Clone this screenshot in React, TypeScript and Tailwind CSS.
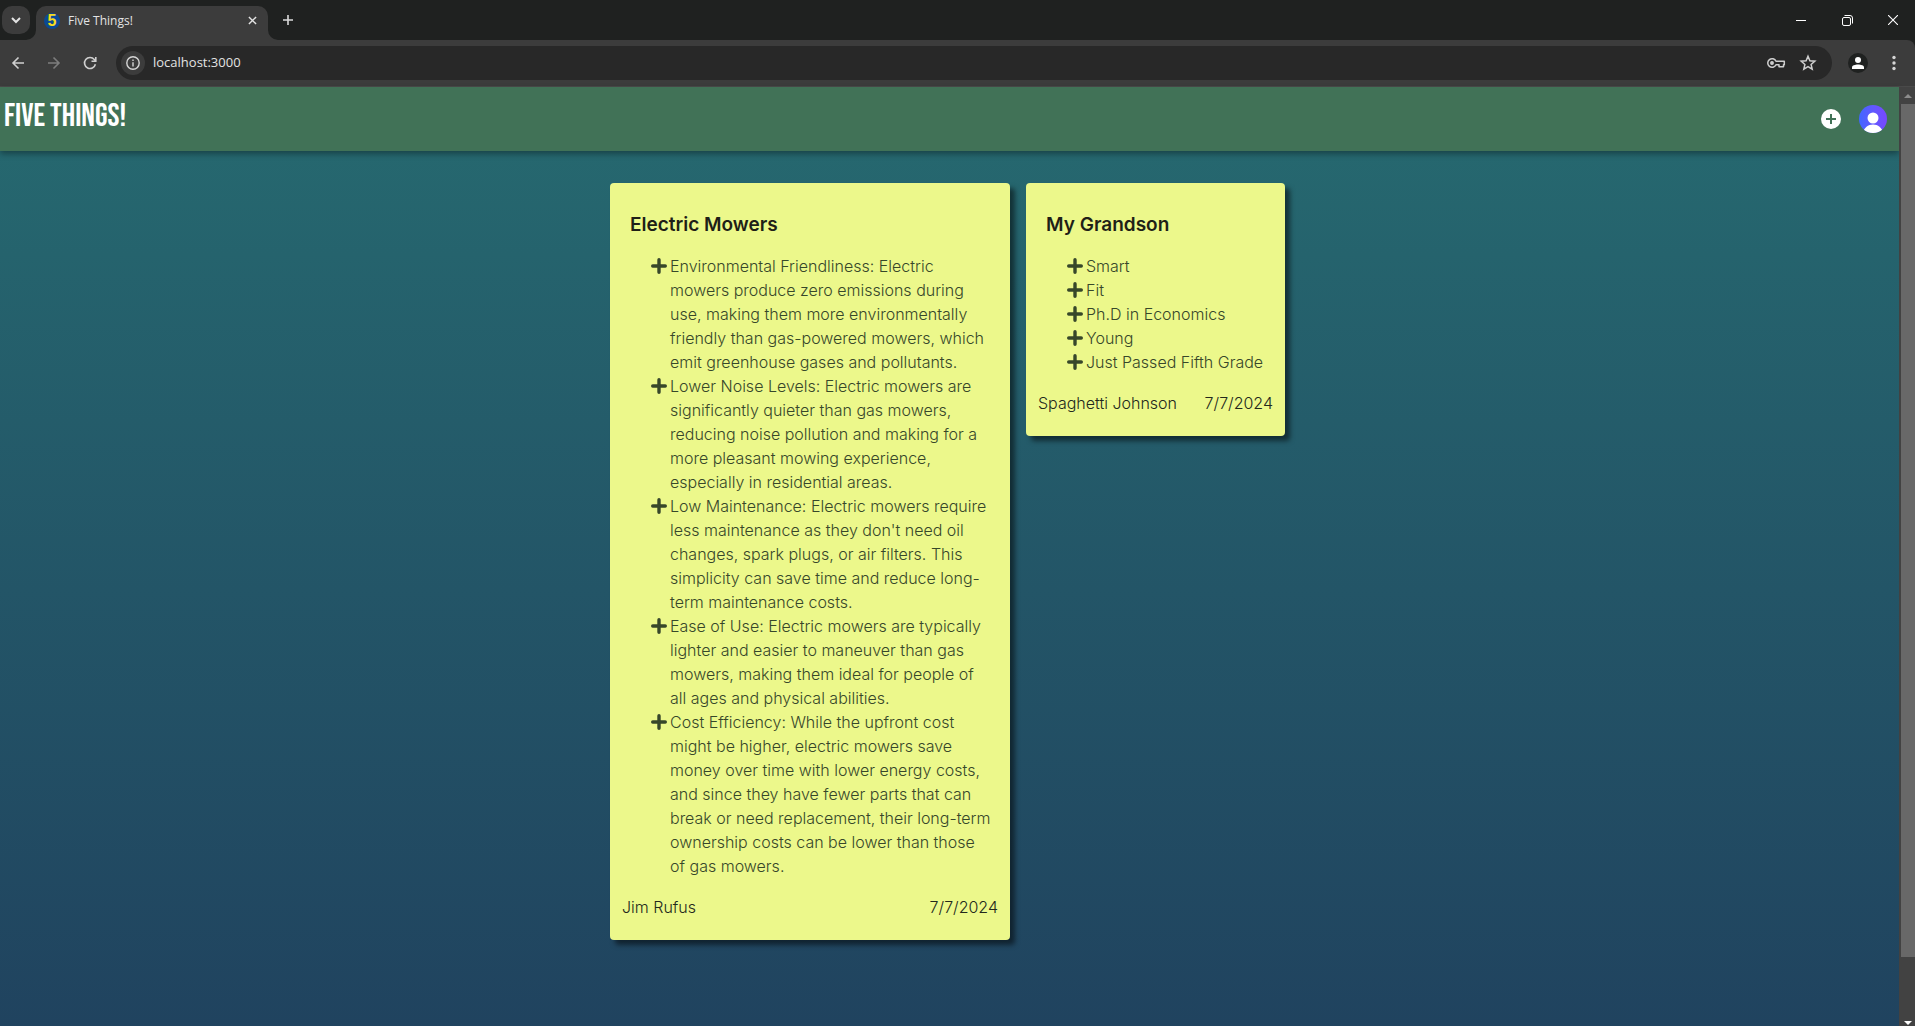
import React from 'react';

type Thing = { lines: string[] };
type CardData = { title: string; author: string; date: string; things: Thing[] };

const mowers: CardData = {
  title: 'Electric Mowers',
  author: 'Jim Rufus',
  date: '7/7/2024',
  things: [
    {
      lines: [
        'Environmental Friendliness: Electric',
        'mowers produce zero emissions during',
        'use, making them more environmentally',
        'friendly than gas-powered mowers, which',
        'emit greenhouse gases and pollutants.',
      ],
    },
    {
      lines: [
        'Lower Noise Levels: Electric mowers are',
        'significantly quieter than gas mowers,',
        'reducing noise pollution and making for a',
        'more pleasant mowing experience,',
        'especially in residential areas.',
      ],
    },
    {
      lines: [
        'Low Maintenance: Electric mowers require',
        "less maintenance as they don't need oil",
        'changes, spark plugs, or air filters. This',
        'simplicity can save time and reduce long-',
        'term maintenance costs.',
      ],
    },
    {
      lines: [
        'Ease of Use: Electric mowers are typically',
        'lighter and easier to maneuver than gas',
        'mowers, making them ideal for people of',
        'all ages and physical abilities.',
      ],
    },
    {
      lines: [
        'Cost Efficiency: While the upfront cost',
        'might be higher, electric mowers save',
        'money over time with lower energy costs,',
        'and since they have fewer parts that can',
        'break or need replacement, their long-term',
        'ownership costs can be lower than those',
        'of gas mowers.',
      ],
    },
  ],
};

const grandson: CardData = {
  title: 'My Grandson',
  author: 'Spaghetti Johnson',
  date: '7/7/2024',
  things: [
    { lines: ['Smart'] },
    { lines: ['Fit'] },
    { lines: ['Ph.D in Economics'] },
    { lines: ['Young'] },
    { lines: ['Just Passed Fifth Grade'] },
  ],
};

function PlusBullet() {
  return (
    <svg viewBox="0 0 16 16" className="h-6 w-4 shrink-0" fill="none" stroke="#37472a" strokeWidth="3.4" strokeLinecap="round" aria-hidden="true">
      <path d="M8 1.700v12.600M1.700 8h12.600" />
    </svg>
  );
}

function Card({ data, className }: { data: CardData; className: string }) {
  return (
    <article className={`rounded bg-[#ecf88b] pt-7 pb-[21px] text-base leading-6 text-[#23281c] shadow-[5px_5px_5px_rgba(0,0,0,0.5)] ${className}`}>
      <h2 className="px-5 text-[19px] leading-7 font-semibold text-[#1f1f17]">{data.title}</h2>
      <ul className="mt-[15px] pr-5 pl-[41px] font-light text-[#37472a]">
        {data.things.map((thing) => (
          <li key={thing.lines[0]} className="flex gap-[3px] whitespace-nowrap">
            <PlusBullet />
            <div>
              {thing.lines.map((line) => (
                <span key={line} className="block">
                  {line}{' '}
                </span>
              ))}
            </div>
          </li>
        ))}
      </ul>
      <footer className="mt-[17px] flex justify-between px-3 font-light whitespace-nowrap">
        <span>{data.author}</span>
        <span>{data.date}</span>
      </footer>
    </article>
  );
}

function TabStrip() {
  return (
    <div className="flex h-10 shrink-0 items-end justify-between bg-[#1f2120]">
      <div className="flex items-end">
        <div className="flex h-10 items-center bg-[#1f2120] pr-[6px] pl-[2px]">
          <button aria-label="Search tabs" className="grid size-7 place-items-center rounded-[10px] bg-[#3c3c3c]">
            <svg viewBox="0 0 10 10" className="size-[10px]" fill="none" stroke="#e3e3e3" strokeWidth="2">
              <path d="M1 3l4 4 4-4" />
            </svg>
          </button>
        </div>
        <div className="relative flex h-[34px] w-[232px] items-center rounded-t-[10px] bg-[#3c3c3c] pr-2 pb-[5px] pl-2">
          <svg viewBox="0 0 10 10" className="absolute bottom-0 -left-[10px] size-[10px]" fill="#3c3c3c">
            <path d="M10 0v10H0A10 10 0 0 0 10 0z" />
          </svg>
          <svg viewBox="0 0 10 10" className="absolute -right-[10px] bottom-0 size-[10px]" fill="#3c3c3c">
            <path d="M0 0v10h10A10 10 0 0 1 0 0z" />
          </svg>
          <span className="grid size-4 place-items-center rounded-full bg-[#0b4a94] font-['Liberation_Sans'] text-base leading-4 font-bold text-[#f5dc1e]">5</span>
          <span className="ml-2 flex-1 font-['Open_Sans'] text-xs text-[#e3e3e3]">Five Things!</span>
          <button aria-label="Close tab" className="grid size-4 place-items-center">
            <svg viewBox="0 0 10 10" className="size-[9px]" stroke="#e3e3e3" strokeWidth="1.6">
              <path d="M1 1l8 8M9 1l-8 8" />
            </svg>
          </button>
        </div>
        <button aria-label="New tab" className="ml-3 grid h-10 w-4 place-items-center">
          <svg viewBox="0 0 12 12" className="size-[12px]" stroke="#dadada" strokeWidth="1.6">
            <path d="M6 1v10M1 6h10" />
          </svg>
        </button>
      </div>
      <div className="flex h-10 items-center">
        <button aria-label="Minimize" className="grid h-10 w-[46px] place-items-center">
          <svg viewBox="0 0 10 10" className="size-[10px]" stroke="#fff">
            <path d="M0 5.5h10" />
          </svg>
        </button>
        <button aria-label="Restore" className="grid h-10 w-[46px] place-items-center">
          <svg viewBox="0 0 11 11" className="size-[11px]" fill="none" stroke="#fff">
            <rect x=".5" y="2.5" width="8" height="8" rx="1.5" />
            <path d="M2.5 .5H8A2.5 2.5 0 0 1 10.500 3V8.500" />
          </svg>
        </button>
        <button aria-label="Close" className="grid h-10 w-[45px] place-items-center">
          <svg viewBox="0 0 10 10" className="size-[10px]" stroke="#fff" strokeWidth="1.1">
            <path d="M0 0l10 10M10 0L0 10" />
          </svg>
        </button>
      </div>
    </div>
  );
}

function Toolbar() {
  return (
    <div className="flex h-[47px] shrink-0 items-center rounded-tr-lg border-b border-[#4a4a4a] bg-[#3c3c3c] pl-3">
      <button aria-label="Back" className="grid h-7 w-3 place-items-center">
        <svg viewBox="0 0 12 12" className="size-3 overflow-visible" fill="none" stroke="#cfcfcf" strokeWidth="1.6">
          <path d="M12 6H1M6.500 .5L1 6l5.500 5.500" />
        </svg>
      </button>
      <button aria-label="Forward" className="ml-6 grid h-7 w-3 place-items-center">
        <svg viewBox="0 0 12 12" className="size-3 overflow-visible" fill="none" stroke="#7d7d7d" strokeWidth="1.6">
          <path d="M0 6h11M5.500 .5L11 6l-5.500 5.500" />
        </svg>
      </button>
      <button aria-label="Reload" className="ml-6 grid h-7 w-3 place-items-center">
        <svg viewBox="0 0 12 12" className="size-3 overflow-visible" fill="none" stroke="#cfcfcf" strokeWidth="1.6">
          <path d="M11.400 7.300A5.500 5.500 0 1 1 10.300 2.500L11.300 3.800" />
          <path d="M11.800 0v4.300H7.500" />
        </svg>
      </button>
      <div className="ml-5 flex h-[34px] flex-1 items-center rounded-full bg-[#282828] pr-4 pl-[5px]">
        <button aria-label="Site information" className="grid size-6 place-items-center rounded-full bg-[#3c3c3c]">
          <svg viewBox="0 0 14 14" className="size-[14px]" fill="none" stroke="#d6d6d6" strokeWidth="1.4">
            <circle cx="7" cy="7" r="6.200" />
            <path d="M7 6.200V10.500M7 3.500v1.500" />
          </svg>
        </button>
        <input aria-label="Address" defaultValue="localhost:3000" className="ml-2 min-w-0 flex-1 bg-transparent font-['Open_Sans'] text-[13px] text-[#e3e3e3] outline-none" />
        <button aria-label="Passwords" className="grid h-6 w-5 place-items-center">
          <svg viewBox="0 0 18 10" className="h-[10px] w-[18px] overflow-visible" fill="none" stroke="#cfcfcf" strokeWidth="1.5">
            <path d="M9 3.300A4.300 4.300 0 1 0 9 6.700H12V8.800H16.500V6.700H17.300V3.300z" strokeLinejoin="round" />
            <circle cx="5" cy="5" r="1.200" fill="#cfcfcf" />
          </svg>
        </button>
        <button aria-label="Bookmark" className="ml-[14px] grid h-6 w-4 place-items-center">
          <svg viewBox="0 0 16 16" className="size-4 overflow-visible" fill="none" stroke="#cfcfcf" strokeWidth="1.500">
            <path d="M8 1.300l1.900 4.500 4.900.4-3.700 3.200 1.100 4.800L8 11.700l-4.200 2.500 1.100-4.800L1.200 6.200l4.900-.4z" />
          </svg>
        </button>
      </div>
      <button aria-label="Profile" className="ml-4 grid size-5 place-items-center overflow-hidden rounded-full bg-[#1f2120]">
        <svg viewBox="0 0 12 12" className="size-3" fill="#fff">
          <circle cx="6" cy="3" r="3" />
          <path d="M0 12v-1.500C0 8.500 3 7.600 6 7.600s6 .9 6 2.900V12z" />
        </svg>
      </button>
      <button aria-label="Browser menu" className="mr-[9px] ml-[14px] grid h-7 w-6 place-items-center">
        <svg viewBox="0 0 4 16" className="h-4 w-1 overflow-visible" fill="#d6d6d6">
          <circle cx="2" cy="2.500" r="1.700" />
          <circle cx="2" cy="8" r="1.700" />
          <circle cx="2" cy="13.500" r="1.700" />
        </svg>
      </button>
    </div>
  );
}

function SiteHeader() {
  return (
    <header className="flex h-16 items-center justify-between bg-[#417257] pr-3 pl-1 shadow-[0_3px_6px_rgba(0,0,0,0.35)]">
      <a href="#" className="pb-1 font-['Bebas_Neue',Roboto,sans-serif] text-[32px] leading-10 font-normal whitespace-nowrap text-white">
        FIVE THINGS!
      </a>
      <nav className="flex items-center gap-[18px]">
        <button aria-label="Add a list" className="grid size-5 place-items-center">
          <svg viewBox="0 0 20 20" className="size-5">
            <circle cx="10" cy="10" r="10" fill="#fff" />
            <path d="M10 5v10M5 10h10" stroke="#417257" strokeWidth="2" />
          </svg>
        </button>
        <button aria-label="Account" className="size-7 overflow-hidden rounded-full bg-linear-to-r from-[#3f66ff] to-[#7847ff]">
          <svg viewBox="0 0 28 28" className="size-7" fill="#fff">
            <circle cx="14" cy="13" r="5.500" />
            <path d="M4 28c1-5.500 5-8.500 10-8.500S23 22.500 24 28z" />
          </svg>
        </button>
      </nav>
    </header>
  );
}

function Scrollbar() {
  return (
    <div className="flex w-4 shrink-0 flex-col bg-[#424242] pl-[2px]" aria-hidden="true">
      <div className="grid h-[17px] place-items-center">
        <svg viewBox="0 0 8 4" className="h-1 w-2" fill="#8c8c8c">
          <path d="M0 4l4-4 4 4z" />
        </svg>
      </div>
      <div className="flex-1 bg-[#686868]" />
      <div className="flex h-[69px] items-end justify-center pb-px">
        <svg viewBox="0 0 8 4" className="h-1 w-2" fill="#fff">
          <path d="M0 0l4 4 4-4z" />
        </svg>
      </div>
    </div>
  );
}

export default function App() {
  return (
    <div className="flex min-h-screen flex-col bg-[#1f2120] font-[Inter,sans-serif]">
      <TabStrip />
      <Toolbar />
      <div className="flex flex-1">
        <div className="min-w-0 flex-1 bg-linear-to-b from-[#266a70] to-[#20435f]">
          <SiteHeader />
          <main className="flex items-start justify-center gap-4 pt-8 pr-1">
            <Card data={mowers} className="w-[400px]" />
            <Card data={grandson} className="w-[259px]" />
          </main>
        </div>
        <Scrollbar />
      </div>
    </div>
  );
}
